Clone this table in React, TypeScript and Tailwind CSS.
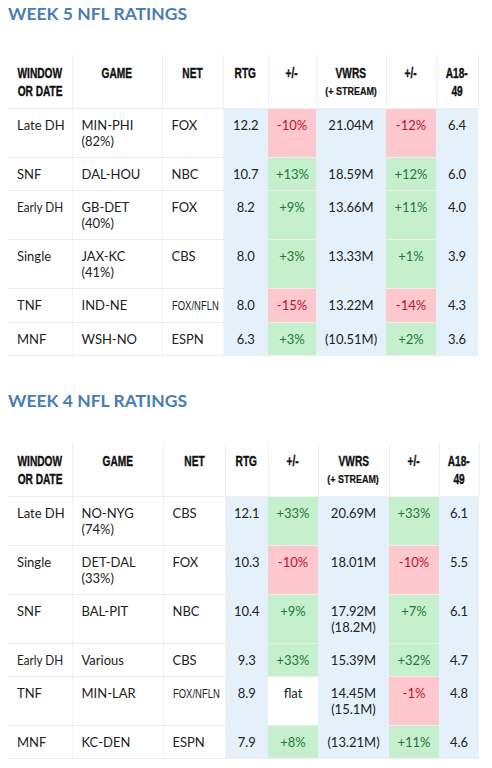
import React from "react";

type Tone = "r" | "g" | "w";
type Row = {
  win: string;
  game: string[];
  net: string;
  rtg: string;
  d1: [string, Tone];
  vw: string[];
  d2: [string, Tone];
  a: string;
};

const week5: Row[] = [
  { win: "Late DH", game: ["MIN-PHI", "(82%)"], net: "FOX", rtg: "12.2", d1: ["-10%", "r"], vw: ["21.04M"], d2: ["-12%", "r"], a: "6.4" },
  { win: "SNF", game: ["DAL-HOU"], net: "NBC", rtg: "10.7", d1: ["+13%", "g"], vw: ["18.59M"], d2: ["+12%", "g"], a: "6.0" },
  { win: "Early DH", game: ["GB-DET", "(40%)"], net: "FOX", rtg: "8.2", d1: ["+9%", "g"], vw: ["13.66M"], d2: ["+11%", "g"], a: "4.0" },
  { win: "Single", game: ["JAX-KC", "(41%)"], net: "CBS", rtg: "8.0", d1: ["+3%", "g"], vw: ["13.33M"], d2: ["+1%", "g"], a: "3.9" },
  { win: "TNF", game: ["IND-NE"], net: "FOX/NFLN", rtg: "8.0", d1: ["-15%", "r"], vw: ["13.22M"], d2: ["-14%", "r"], a: "4.3" },
  { win: "MNF", game: ["WSH-NO"], net: "ESPN", rtg: "6.3", d1: ["+3%", "g"], vw: ["(10.51M)"], d2: ["+2%", "g"], a: "3.6" },
];

const week4: Row[] = [
  { win: "Late DH", game: ["NO-NYG", "(74%)"], net: "CBS", rtg: "12.1", d1: ["+33%", "g"], vw: ["20.69M"], d2: ["+33%", "g"], a: "6.1" },
  { win: "Single", game: ["DET-DAL", "(33%)"], net: "FOX", rtg: "10.3", d1: ["-10%", "r"], vw: ["18.01M"], d2: ["-10%", "r"], a: "5.5" },
  { win: "SNF", game: ["BAL-PIT"], net: "NBC", rtg: "10.4", d1: ["+9%", "g"], vw: ["17.92M", "(18.2M)"], d2: ["+7%", "g"], a: "6.1" },
  { win: "Early DH", game: ["Various"], net: "CBS", rtg: "9.3", d1: ["+33%", "g"], vw: ["15.39M"], d2: ["+32%", "g"], a: "4.7" },
  { win: "TNF", game: ["MIN-LAR"], net: "FOX/NFLN", rtg: "8.9", d1: ["flat", "w"], vw: ["14.45M", "(15.1M)"], d2: ["-1%", "r"], a: "4.8" },
  { win: "MNF", game: ["KC-DEN"], net: "ESPN", rtg: "7.9", d1: ["+8%", "g"], vw: ["(13.21M)"], d2: ["+11%", "g"], a: "4.6" },
];

const toneCls: Record<Tone, string> = {
  g: "bg-[#c6efce] text-[#1f7a35]",
  r: "bg-[#ffc7ce] text-[#b8152f]",
  w: "bg-white text-[#222222]",
};

const td = "align-top py-2 px-2 leading-4 border-b border-[#ededed] whitespace-nowrap";
const tdLeft = td + " border-r border-r-[#f3f3f3] text-left pl-[9px]";
const tdNum = td + " text-center px-1";

function Head({ lines, small }: { lines: string[]; small?: string }) {
  return (
    <th className="align-top pt-[9px] pb-2 px-0 border-r border-b border-[#f0f0f0] font-normal">
      {lines.map((l) => (
        <div key={l} className="flex justify-center">
          <span className="inline-block scale-x-[0.7] font-bold text-[14.5px] leading-[18px] whitespace-nowrap text-[#111111] [-webkit-text-stroke:0.4px_#111111]">
            {l}
          </span>
        </div>
      ))}
      {small && (
        <div className="flex justify-center">
          <span className="inline-block scale-x-[0.78] font-bold text-[11.5px] leading-[18px] whitespace-nowrap text-[#111111] [-webkit-text-stroke:0.2px_#111111]">
            {small}
          </span>
        </div>
      )}
    </th>
  );
}

function Table({ rows, widths }: { rows: Row[]; widths: number[] }) {
  return (
    <table className="table-fixed border-collapse text-[13px] text-[#222222]" style={{ width: widths.reduce((a, b) => a + b, 0) }}>
      <colgroup>
        {widths.map((w, i) => (
          <col key={i} style={{ width: w }} />
        ))}
      </colgroup>
      <thead>
        <tr className="font-['Liberation_Sans',sans-serif]">
          <Head lines={["WINDOW", "OR DATE"]} />
          <Head lines={["GAME"]} />
          <Head lines={["NET"]} />
          <Head lines={["RTG"]} />
          <Head lines={["+/-"]} />
          <Head lines={["VWRS"]} small="(+ STREAM)" />
          <Head lines={["+/-"]} />
          <Head lines={["A18-", "49"]} />
        </tr>
      </thead>
      <tbody>
        {rows.map((r, i) => (
          <tr key={i}>
            <td className={tdLeft}>
              {r.win === "Early DH" ? (
                <span className="inline-block origin-left scale-x-[0.9] whitespace-nowrap">{r.win}</span>
              ) : (
                r.win
              )}
            </td>
            <td className={tdLeft}>
              {r.game.map((g) => (
                <div key={g}>{g}</div>
              ))}
            </td>
            <td className={tdLeft}>
              {r.net === "FOX/NFLN" ? (
                <span className="inline-block origin-left scale-x-[0.7] whitespace-nowrap font-['Liberation_Sans',sans-serif] text-[13.5px]">
                  {r.net}
                </span>
              ) : (
                r.net
              )}
            </td>
            <td className={tdNum + " bg-[#e4f1fb]"}>{r.rtg}</td>
            <td className={tdNum + " " + toneCls[r.d1[1]]}>{r.d1[0]}</td>
            <td className={tdNum + " bg-[#e4f1fb]"}>
              {r.vw.map((v) => (
                <div key={v}>{v}</div>
              ))}
            </td>
            <td className={tdNum + " " + toneCls[r.d2[1]]}>{r.d2[0]}</td>
            <td className={tdNum + " bg-[#e4f1fb]"}>{r.a}</td>
          </tr>
        ))}
      </tbody>
    </table>
  );
}

export default function App() {
  return (
    <div className="w-[492px] min-h-[768px] bg-white px-2 pt-[2px] font-['Lato',sans-serif]">
      <h2 className="text-[17.5px] font-bold leading-6 text-[#4a7db4]">WEEK 5 NFL RATINGS</h2>
      <div className="mt-[29px]">
        <Table rows={week5} widths={[64, 90, 61, 45, 48, 70, 50, 42]} />
      </div>
      <h2 className="mt-[33px] text-[17.5px] font-bold leading-6 text-[#4a7db4]">WEEK 4 NFL RATINGS</h2>
      <div className="mt-[30px]">
        <Table rows={week4} widths={[64, 91, 62, 43, 50, 71, 50, 40]} />
      </div>
    </div>
  );
}
